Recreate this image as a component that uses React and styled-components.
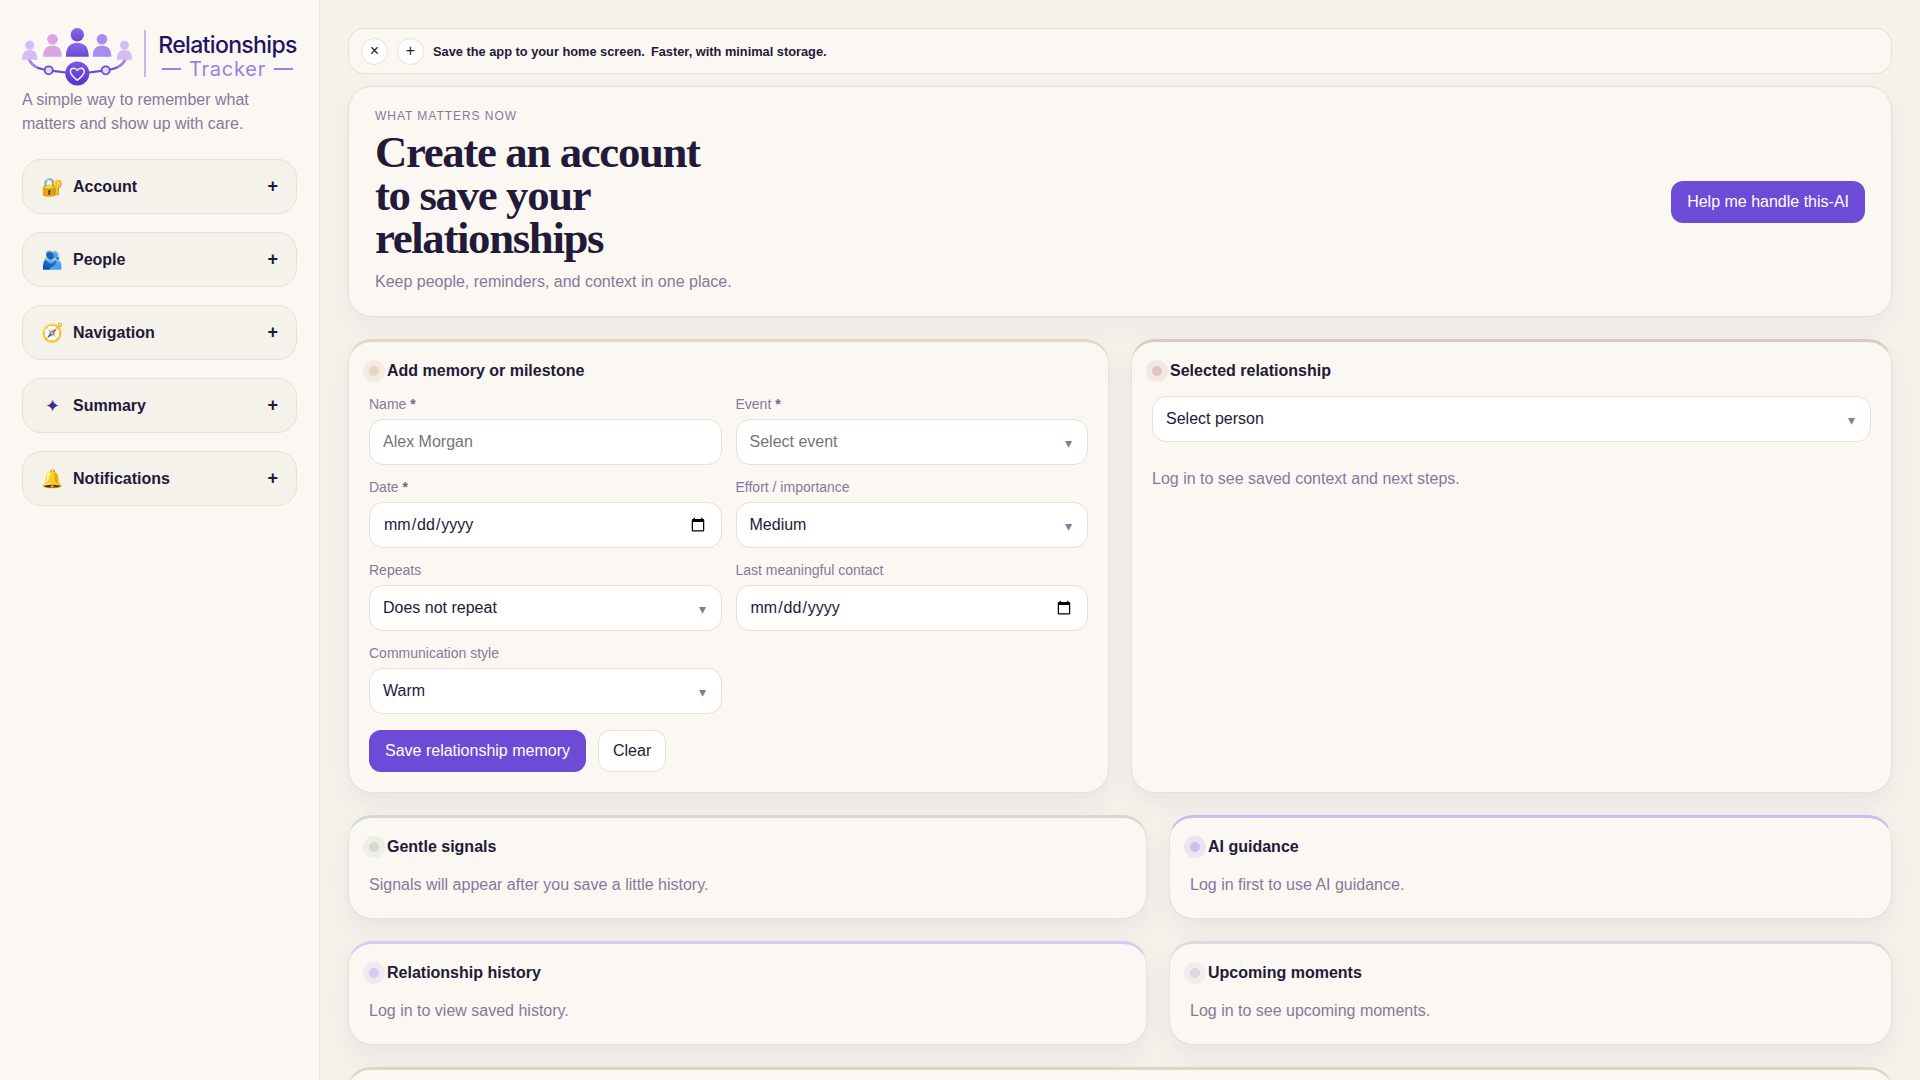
import React from "react";
import styled, { createGlobalStyle } from "styled-components";

const ink = "#221a38";
const muted = "#857a9a";
const line = "#e6e0d6";
const paper = "#fbf8f3";
const violet = "#6d4bd6";

const Global = createGlobalStyle`
  * { box-sizing: border-box; }
  html, body { margin: 0; height: 100%; overflow: hidden; }
  body { font-family: "Liberation Sans", Arial, sans-serif; color: ${ink}; background: #f5f2ec; }
`;

const Shell = styled.div`
  display: grid;
  grid-template-columns: 320px 1fr;
  height: 100vh;
  overflow: hidden;
`;

const Sidebar = styled.aside`
  background: ${paper};
  border-right: 1px solid #e9e4da;
  padding: 27px 22px 22px;
  display: flex;
  flex-direction: column;
`;

const Brand = styled.div`
  display: flex;
  align-items: flex-start;
  height: 61px;
  margin-left: -1px;
`;

const BrandMark = styled.svg`
  width: 112px;
  height: 60px;
  flex: none;
  display: block;
`;

const BrandRule = styled.div`
  width: 2px;
  height: 47px;
  margin: 3px 12px 0 11px;
  background: #c6b6ef;
  flex: none;
`;

const BrandText = styled.div`
  display: flex;
  flex-direction: column;
  align-items: center;
  width: 139px;
  flex: none;
`;

const BrandName = styled.div`
  font-family: Inter, "Liberation Sans", sans-serif;
  font-weight: 500;
  font-size: 23px;
  letter-spacing: -0.65px;
  line-height: 28px;
  margin-top: 4px;
  color: #1f1566;
  white-space: nowrap;
`;

const BrandSub = styled.div`
  display: flex;
  align-items: center;
  gap: 8px;
  font-family: Inter, "Liberation Sans", sans-serif;
  font-size: 20px;
  letter-spacing: 0.75px;
  line-height: 20px;
  margin-top: 0;
  color: #9a7fe6;
  &::before, &::after {
    content: "";
    width: 19px;
    height: 1.5px;
    background: #9a7fe6;
  }
`;

const Tagline = styled.p`
  margin: 0 0 23px;
  font-size: 16px;
  line-height: 24px;
  color: ${muted};
`;

const Accordion = styled.div`
  display: flex;
  flex-direction: column;
  gap: 18px;
`;

const AccordionHead = styled.button`
  display: flex;
  align-items: center;
  height: 55px;
  padding: 0 18px;
  width: 100%;
  background: #f5f2ec;
  border: 1px solid #e6e1d8;
  border-radius: 19px;
  font: bold 16px "Liberation Sans", Arial, sans-serif;
  color: ${ink};
  text-align: left;
`;

const AccordionIcon = styled.span`
  width: 22px;
  margin-right: 10px;
  text-align: center;
  font-weight: normal;
  font-size: 18px;
  line-height: 20px;
  flex: none;
  color: #3b2a8c;
`;

const AccordionLabel = styled.span`
  flex: 1;
`;

const AccordionPlus = styled.span`
  font-size: 18px;
  color: ${ink};
`;

const Main = styled.main`
  padding: 28px 28px 0;
  display: flex;
  flex-direction: column;
  min-width: 0;
  overflow: hidden;
`;

const InstallBar = styled.div`
  display: flex;
  align-items: center;
  gap: 9px;
  height: 46px;
  padding: 0 12px;
  margin-bottom: 12px;
  background: ${paper};
  border: 1px solid ${line};
  border-radius: 16px;
  flex: none;
`;

const RoundButton = styled.button`
  width: 27px;
  height: 27px;
  padding: 0;
  border-radius: 50%;
  border: 1px solid ${line};
  background: #fff;
  color: ${ink};
  font: 16px/1 "Liberation Sans", Arial, sans-serif;
  flex: none;
`;

const InstallText = styled.div`
  display: flex;
  gap: 6px;
  font-size: 12.8px;
  font-weight: bold;
  color: ${ink};
`;

const Hero = styled.section`
  display: flex;
  align-items: center;
  justify-content: space-between;
  padding: 22px 26px 0;
  margin-bottom: 22px;
  height: 231px;
  background: ${paper};
  border: 1px solid ${line};
  border-radius: 24px;
  box-shadow: 0 10px 24px rgba(60, 45, 90, 0.05);
  flex: none;
`;

const HeroCopy = styled.div`
  display: flex;
  flex-direction: column;
  align-self: flex-start;
`;

const Eyebrow = styled.div`
  font-size: 12px;
  line-height: 14px;
  letter-spacing: 0.08em;
  text-transform: uppercase;
  color: ${muted};
`;

const HeroTitle = styled.h1`
  margin: 8px 0 10px;
  max-width: 340px;
  font: bold 44.8px/43px "Liberation Serif", "Times New Roman", serif;
  letter-spacing: -0.03em;
  color: ${ink};
`;

const HeroNote = styled.p`
  margin: 0;
  font-size: 16px;
  line-height: 24px;
  color: ${muted};
`;

const PrimaryButton = styled.button`
  height: 42px;
  padding: 0 16px;
  border: 0;
  border-radius: 12px;
  background: ${violet};
  color: #fff;
  font: 16px "Liberation Sans", Arial, sans-serif;
  flex: none;
`;

const HeroAction = styled(PrimaryButton)`
  margin-top: -22px;
`;

const GhostButton = styled.button`
  height: 42px;
  padding: 0 14px;
  border: 1px solid ${line};
  border-radius: 12px;
  background: #fff;
  color: ${ink};
  font: 16px "Liberation Sans", Arial, sans-serif;
  flex: none;
`;

const Row = styled.div`
  display: grid;
  grid-template-columns: ${(p) => p.$columns};
  gap: 22px;
  margin-bottom: 22px;
  flex: none;
`;

const Card = styled.section`
  padding: 19px 20px 21px;
  background: ${paper};
  border: 1px solid ${line};
  border-top: 3px solid ${(p) => p.$accent};
  border-radius: 24px;
  box-shadow: 0 10px 24px rgba(60, 45, 90, 0.07);
  min-width: 0;
`;

const FormCard = styled(Card)`
  padding-bottom: 20px;
`;

const CardTitle = styled.h2`
  display: flex;
  align-items: center;
  gap: 8px;
  margin: 0;
  font-size: 16px;
  line-height: 20px;
  font-weight: bold;
  color: ${ink};
  &::before {
    content: "";
    width: 10px;
    height: 10px;
    border-radius: 50%;
    background: ${(p) => p.$accent};
    box-shadow: 0 0 0 6px ${(p) => p.$accent}55;
    flex: none;
  }
`;

const CardNote = styled.p`
  margin: ${(p) => p.$gap || 16}px 0 0;
  font-size: 16px;
  line-height: 24px;
  color: ${muted};
`;

const FormGrid = styled.div`
  display: grid;
  grid-template-columns: 1fr 1fr;
  column-gap: 14px;
  row-gap: 14px;
  margin-top: 15px;
`;

const Field = styled.label`
  display: flex;
  flex-direction: column;
  gap: 7px;
  min-width: 0;
`;

const FieldLabel = styled.span`
  font-size: 14px;
  line-height: 16px;
  color: ${muted};
`;

const Required = styled.span`
  font-weight: bold;
  color: #6f6388;
`;

const Input = styled.input`
  width: 100%;
  height: 46px;
  padding: 0 13px;
  border: 1px solid ${line};
  border-radius: 14px;
  background: #fff;
  color: ${ink};
  font: 16px "Liberation Sans", Arial, sans-serif;
`;

const SelectWrap = styled.div`
  position: relative;
  margin-top: ${(p) => p.$top || 0}px;
  &::after {
    content: "▾";
    position: absolute;
    right: 16px;
    top: 14px;
    font-size: 14px;
    line-height: 20px;
    color: ${muted};
    pointer-events: none;
  }
`;

const Select = styled.select`
  width: 100%;
  height: 46px;
  padding: 0 30px 1px 13px;
  appearance: none;
  border: 1px solid ${line};
  border-radius: 14px;
  background: #fff;
  color: ${(p) => (p.$placeholder ? "#757575" : ink)};
  font: 16px "Liberation Sans", Arial, sans-serif;
`;

const Actions = styled.div`
  display: flex;
  gap: 12px;
  margin-top: 16px;
`;

const FooterCard = styled(Card)`
  height: 140px;
`;

const navItems = [
  ["🔐", "Account"],
  ["🫂", "People"],
  ["🧭", "Navigation"],
  ["✦", "Summary"],
  ["🔔", "Notifications"],
];

function Person({ x, headY, r, top, bottom, w, fill }) {
  const h = bottom - top;
  return (
    <g fill={fill}>
      <circle cx={x} cy={headY} r={r} />
      <path d={`M${x - w} ${bottom} C${x - w} ${top + h * 0.15} ${x - w * 0.5} ${top} ${x} ${top} C${x + w * 0.5} ${top} ${x + w} ${top + h * 0.15} ${x + w} ${bottom} Z`} />
    </g>
  );
}

function Logo() {
  return (
    <BrandMark viewBox="0 0 112 60" aria-hidden="true">
      <defs>
        <linearGradient id="lead" x1="0" y1="0" x2="0" y2="1">
          <stop offset="0" stopColor="#8c68e8" />
          <stop offset="1" stopColor="#6a46d8" />
        </linearGradient>
        <linearGradient id="hub" x1="0" y1="0" x2="0" y2="1">
          <stop offset="0" stopColor="#7a55e2" />
          <stop offset="1" stopColor="#5a36c6" />
        </linearGradient>
      </defs>
      <path d="M8 32C11 40 19 42 27.7 43.3L56.3 47L84.7 43.3C93 42 101 40 104.5 32" fill="none" stroke="#6d4bd6" strokeWidth="2.2" />
      <path d="M8 32C9.5 36 12 38.5 16 40.2M104.5 32C103 36 100.5 38.5 96.5 40.2" fill="none" stroke="#a784e6" strokeWidth="2.2" />
      <Person x={8.7} headY={18.3} r={4.5} top={23} bottom={32.7} w={7.7} fill="#d4bdf6" />
      <Person x={31.5} headY={12.3} r={5.3} top={18.7} bottom={29.7} w={9.3} fill="#dba4e2" />
      <Person x={56.3} headY={7.7} r={6.7} top={16} bottom={29.7} w={11.4} fill="url(#lead)" />
      <Person x={81} headY={12.3} r={5.3} top={18.7} bottom={29.7} w={9.3} fill="#a98cf0" />
      <Person x={103.5} headY={18.3} r={4.5} top={23} bottom={32.7} w={7.7} fill="#d4bdf6" />
      <circle cx="27.7" cy="43.3" r="4" fill="#e6dcfb" stroke="#6d4bd6" strokeWidth="1.8" />
      <circle cx="84.7" cy="43.3" r="4" fill="#e6dcfb" stroke="#6d4bd6" strokeWidth="1.8" />
      <circle cx="56.3" cy="46.5" r="12" fill="url(#hub)" />
      <path d="M56.3 53.2C52.5 50.2 49.4 47.8 49.4 44.7C49.4 42.6 51 41.2 52.8 41.2C54.2 41.2 55.5 42 56.3 43.4C57.1 42 58.4 41.2 59.8 41.2C61.6 41.2 63.2 42.6 63.2 44.7C63.2 47.8 60.1 50.2 56.3 53.2Z" fill="none" stroke="#f3ecff" strokeWidth="1.5" strokeLinejoin="round" />
    </BrandMark>
  );
}

function SelectField({ label, value, placeholder, required }) {
  return (
    <Field>
      <FieldLabel>
        {label}
        {required && <Required> *</Required>}
      </FieldLabel>
      <SelectWrap>
        <Select $placeholder={placeholder} defaultValue={value}>
          <option>{value}</option>
        </Select>
      </SelectWrap>
    </Field>
  );
}

export default function App() {
  return (
    <>
      <Global />
      <Shell>
        <Sidebar>
          <Brand>
            <Logo />
            <BrandRule />
            <BrandText>
              <BrandName>Relationships</BrandName>
              <BrandSub>Tracker</BrandSub>
            </BrandText>
          </Brand>
          <Tagline>A simple way to remember what matters and show up with care.</Tagline>
          <Accordion>
            {navItems.map(([icon, label]) => (
              <AccordionHead key={label}>
                <AccordionIcon>{icon}</AccordionIcon>
                <AccordionLabel>{label}</AccordionLabel>
                <AccordionPlus>+</AccordionPlus>
              </AccordionHead>
            ))}
          </Accordion>
        </Sidebar>
        <Main>
          <InstallBar>
            <RoundButton>×</RoundButton>
            <RoundButton>+</RoundButton>
            <InstallText>
              <span>Save the app to your home screen.</span>
              <span>Faster, with minimal storage.</span>
            </InstallText>
          </InstallBar>
          <Hero>
            <HeroCopy>
              <Eyebrow>What matters now</Eyebrow>
              <HeroTitle>Create an account to save your relationships</HeroTitle>
              <HeroNote>Keep people, reminders, and context in one place.</HeroNote>
            </HeroCopy>
            <HeroAction>Help me handle this-AI</HeroAction>
          </Hero>
          <Row $columns="1fr 1fr">
            <FormCard $accent="#e8d5c0">
              <CardTitle $accent="#e8d5c0">Add memory or milestone</CardTitle>
              <FormGrid>
                <Field>
                  <FieldLabel>Name<Required> *</Required></FieldLabel>
                  <Input placeholder="Alex Morgan" />
                </Field>
                <SelectField label="Event" required value="Select event" placeholder />
                <Field>
                  <FieldLabel>Date<Required> *</Required></FieldLabel>
                  <Input type="date" />
                </Field>
                <SelectField label="Effort / importance" value="Medium" />
                <SelectField label="Repeats" value="Does not repeat" />
                <Field>
                  <FieldLabel>Last meaningful contact</FieldLabel>
                  <Input type="date" />
                </Field>
                <SelectField label="Communication style" value="Warm" />
              </FormGrid>
              <Actions>
                <PrimaryButton>Save relationship memory</PrimaryButton>
                <GhostButton>Clear</GhostButton>
              </Actions>
            </FormCard>
            <Card $accent="#e0c8c0">
              <CardTitle $accent="#e0c8c0">Selected relationship</CardTitle>
              <SelectWrap $top={15}>
                <Select defaultValue="Select person">
                  <option>Select person</option>
                </Select>
              </SelectWrap>
              <CardNote $gap={25}>Log in to see saved context and next steps.</CardNote>
            </Card>
          </Row>
          <Row $columns="799px 1fr">
            <Card $accent="#d2dcc8">
              <CardTitle $accent="#d2dcc8">Gentle signals</CardTitle>
              <CardNote>Signals will appear after you save a little history.</CardNote>
            </Card>
            <Card $accent="#cdbdec">
              <CardTitle $accent="#cdbdec">AI guidance</CardTitle>
              <CardNote>Log in first to use AI guidance.</CardNote>
            </Card>
          </Row>
          <Row $columns="799px 1fr">
            <Card $accent="#dcc8f2">
              <CardTitle $accent="#dcc8f2">Relationship history</CardTitle>
              <CardNote>Log in to view saved history.</CardNote>
            </Card>
            <Card $accent="#e4d6e0">
              <CardTitle $accent="#e4d6e0">Upcoming moments</CardTitle>
              <CardNote>Log in to see upcoming moments.</CardNote>
            </Card>
          </Row>
          <FooterCard $accent="#e0d5c3" />
        </Main>
      </Shell>
    </>
  );
}
